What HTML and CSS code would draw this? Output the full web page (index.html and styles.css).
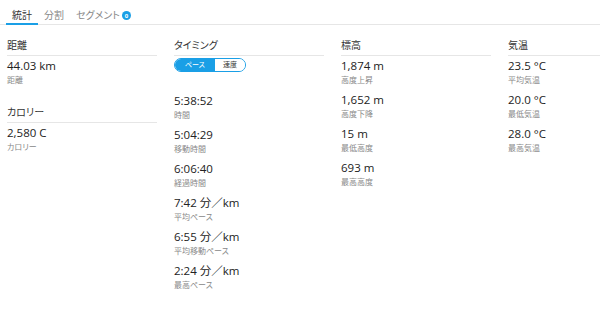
FILE: index.html
```html
<!DOCTYPE html>
<html lang="ja">
<head>
<meta charset="utf-8">
<link rel="stylesheet" href="styles.css">
</head>
<body>
<nav class="tabs">
  <div class="tab active">統計</div>
  <div class="tab">分割</div>
  <div class="tab">セグメント<span class="badge">0</span></div>
</nav>
<main class="grid">
  <div class="col">
    <section class="section">
      <h3 class="head">距離</h3>
      <div class="stat"><div class="val">44.03 km</div><div class="lbl">距離</div></div>
    </section>
    <section class="section">
      <h3 class="head">カロリー</h3>
      <div class="stat"><div class="val">2,580 C</div><div class="lbl">カロリー</div></div>
    </section>
  </div>
  <div class="col">
    <section class="section">
      <h3 class="head">タイミング</h3>
      <div class="toggle"><span class="opt on">ペース</span><span class="opt">速度</span></div>
      <div class="stat"><div class="val">5:38:52</div><div class="lbl">時間</div></div>
      <div class="stat"><div class="val">5:04:29</div><div class="lbl">移動時間</div></div>
      <div class="stat"><div class="val">6:06:40</div><div class="lbl">経過時間</div></div>
      <div class="stat"><div class="val">7:42 分／km</div><div class="lbl">平均ペース</div></div>
      <div class="stat"><div class="val">6:55 分／km</div><div class="lbl">平均移動ペース</div></div>
      <div class="stat"><div class="val">2:24 分／km</div><div class="lbl">最高ペース</div></div>
    </section>
  </div>
  <div class="col">
    <section class="section">
      <h3 class="head">標高</h3>
      <div class="stat"><div class="val">1,874 m</div><div class="lbl">高度上昇</div></div>
      <div class="stat"><div class="val">1,652 m</div><div class="lbl">高度下降</div></div>
      <div class="stat"><div class="val">15 m</div><div class="lbl">最低高度</div></div>
      <div class="stat"><div class="val">693 m</div><div class="lbl">最高高度</div></div>
    </section>
  </div>
  <div class="col">
    <section class="section">
      <h3 class="head">気温</h3>
      <div class="stat"><div class="val">23.5 °C</div><div class="lbl">平均気温</div></div>
      <div class="stat"><div class="val">20.0 °C</div><div class="lbl">最低気温</div></div>
      <div class="stat"><div class="val">28.0 °C</div><div class="lbl">最高気温</div></div>
    </section>
  </div>
</main>
</body>
</html>
```
FILE: styles.css
```css
html, body {
  margin: 0;
  padding: 0;
  background: #fff;
  font-family: "Open Sans", "Noto Sans CJK JP", sans-serif;
  font-feature-settings: "palt";
  color: #222;
}
.tabs {
  display: flex;
  padding-left: 6px;
  border-bottom: 1px solid #e6e6e6;
  height: 25px;
  box-sizing: border-box;
}
.tab {
  padding: 0 6px;
  font-size: 10px;
  line-height: 14px;
  padding-top: 8px;
  color: #888;
  display: flex;
  align-items: flex-start;
  border-bottom: 2px solid transparent;
  margin-bottom: -1px;
}
.tab.active {
  color: #333;
  border-bottom-color: #1a9fe6;
}
.badge {
  display: inline-flex;
  align-items: center;
  justify-content: center;
  width: 9px;
  height: 9px;
  margin-top: 3px;
  margin-left: 2px;
  border-radius: 50%;
  background: #1a9fe6;
  color: #fff;
  font-size: 6px;
  font-weight: 700;
  line-height: 1;
}
.grid {
  display: grid;
  grid-template-columns: 150px 150px 150px 1fr;
  column-gap: 17px;
  padding-left: 7px;
  margin-top: 13px;
}
.section {
  margin-bottom: 19px;
}
.head {
  margin: 0;
  font-size: 10px;
  font-weight: 400;
  line-height: 14px;
  color: #333;
  padding-bottom: 3px;
  border-bottom: 1px solid #e6e6e6;
  margin-bottom: 1px;
}
.stat {
  margin-bottom: 5px;
}
.val {
  font-size: 11.5px;
  line-height: 17px;
  color: #222;
}
.lbl {
  font-size: 8px;
  line-height: 12px;
  color: #888;
}
.toggle {
  display: flex;
  width: fit-content;
  margin-top: 2px;
  margin-bottom: 20px;
  border: 1px solid #1a9fe6;
  border-radius: 8px;
  overflow: hidden;
  height: 14px;
  box-sizing: border-box;
}
.opt {
  font-size: 7px;
  line-height: 12px;
  padding: 0 8px;
  color: #333;
  background: #fff;
}
.opt.on {
  background: #1a9fe6;
  color: #fff;
  width: 22px;
  text-align: center;
  padding: 0 9px;
}
```
